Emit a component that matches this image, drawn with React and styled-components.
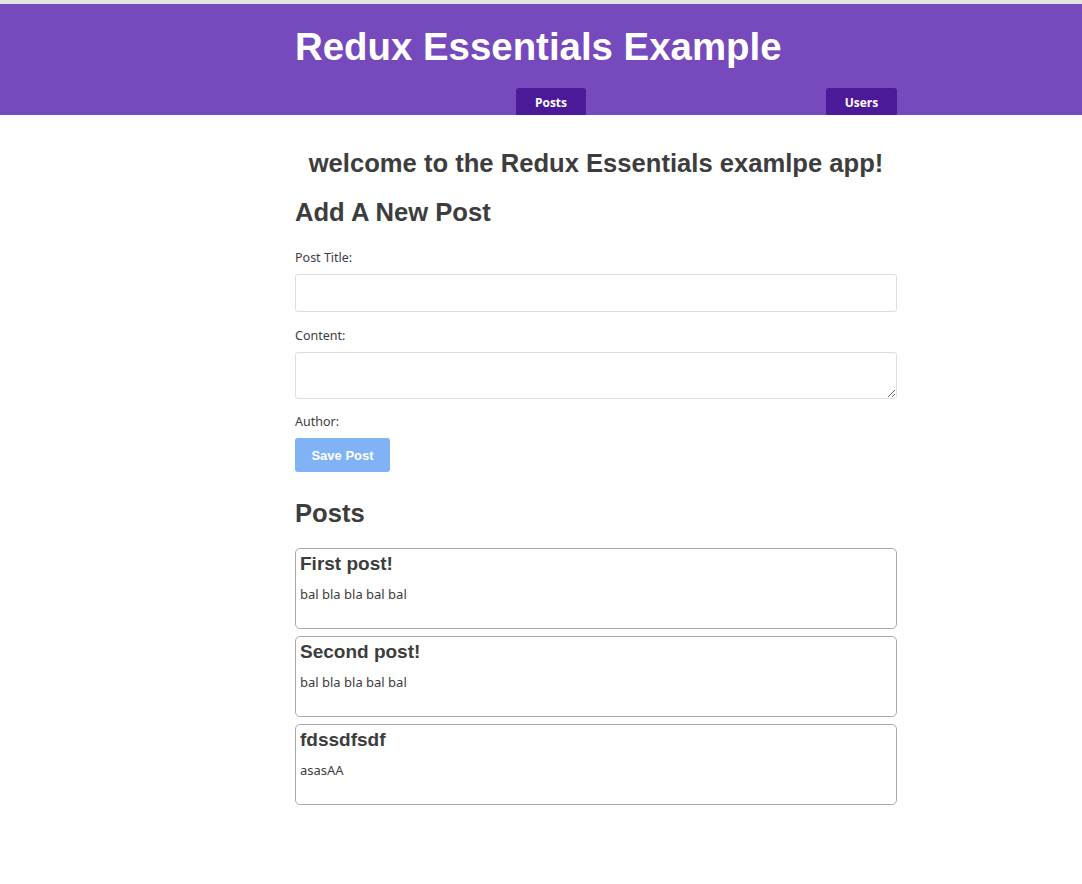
import React from 'react';
import styled, { createGlobalStyle } from 'styled-components';

const GlobalStyle = createGlobalStyle`
  body {
    margin: 0;
    font-family: "Noto Sans", "Open Sans", sans-serif;
    color: #3d3d3d;
    background: #fff;
  }
`;

const TopStrip = styled.div`
  height: 4px;
  background: #e4e4e4;
`;

const Nav = styled.nav`
  background: #764abc;
  height: 111px;
  overflow: hidden;
`;

const Inner = styled.div`
  width: 602px;
  margin-left: 295px;
`;

const NavTitle = styled.h1`
  margin: 0;
  padding-top: 21px;
  font-family: "Liberation Sans", Arial, sans-serif;
  font-size: 38.4px;
  font-weight: bold;
  color: #fff;
  line-height: 44px;
`;

const NavLinks = styled.div`
  display: flex;
  justify-content: flex-end;
  gap: 240px;
  margin-top: 19px;
`;

const NavButton = styled.a`
  display: inline-flex;
  align-items: center;
  justify-content: center;
  width: ${p => p.w}px;
  height: 28px;
  background: #4a1a98;
  border-radius: 3px;
  color: #fff;
  font-family: "Open Sans", sans-serif;
  font-weight: bold;
  font-size: 12px;
  text-decoration: none;
`;

const Main = styled.main`
  padding-top: 33px;
  padding-bottom: 60px;
`;

const Welcome = styled.h2`
  margin: 0;
  text-align: center;
  font-family: "Liberation Sans", Arial, sans-serif;
  font-size: 25.6px;
  font-weight: bold;
  line-height: 30px;
`;

const SectionTitle = styled.h2`
  margin: ${p => p.top}px 0 0;
  font-family: "Liberation Sans", Arial, sans-serif;
  font-size: 25.6px;
  font-weight: bold;
  line-height: 32px;
`;

const Form = styled.form`
  display: flex;
  flex-direction: column;
  margin-top: 22px;
`;

const Label = styled.label`
  font-size: 12.5px;
  line-height: 16px;
  margin-bottom: 8px;
`;

const TextInput = styled.input`
  box-sizing: border-box;
  height: 38px;
  border: 1px solid #dedede;
  border-radius: 3px;
  margin-bottom: 16px;
`;

const TextArea = styled.textarea`
  box-sizing: border-box;
  height: 47px;
  border: 1px solid #dedede;
  border-radius: 3px;
  margin: 0 0 15px;
`;

const SaveButton = styled.button`
  align-self: flex-start;
  width: 95px;
  height: 34px;
  border: none;
  border-radius: 3px;
  background: #80b2f6;
  color: #fff;
  font-family: "Liberation Sans", Arial, sans-serif;
  font-weight: bold;
  font-size: 13px;
`;

const PostList = styled.div`
  display: flex;
  flex-direction: column;
  gap: 7px;
  margin-top: 19px;
`;

const PostCard = styled.article`
  box-sizing: border-box;
  height: 81px;
  border: 1px solid #aaa;
  border-radius: 5px;
  padding: 3px 4px;
`;

const PostTitle = styled.h3`
  margin: 0;
  font-family: "Liberation Sans", Arial, sans-serif;
  font-size: 19px;
  font-weight: bold;
  line-height: 24px;
`;

const PostBody = styled.p`
  margin: 10px 0 0;
  font-size: 13px;
  line-height: 16px;
`;

const posts = [
  { id: 1, title: 'First post!', content: 'bal bla bla bal bal' },
  { id: 2, title: 'Second post!', content: 'bal bla bla bal bal' },
  { id: 3, title: 'fdssdfsdf', content: 'asasAA' },
];

function App() {
  return (
    <>
      <GlobalStyle />
      <TopStrip />
      <Nav>
        <Inner>
          <NavTitle>Redux Essentials Example</NavTitle>
          <NavLinks>
            <NavButton href="#" w={70}>Posts</NavButton>
            <NavButton href="#" w={71}>Users</NavButton>
          </NavLinks>
        </Inner>
      </Nav>
      <Main>
        <Inner>
          <Welcome>welcome to the Redux Essentials examlpe app!</Welcome>
          <SectionTitle top={18}>Add A New Post</SectionTitle>
          <Form onSubmit={e => e.preventDefault()}>
            <Label htmlFor="postTitle">Post Title:</Label>
            <TextInput id="postTitle" type="text" />
            <Label htmlFor="postContent">Content:</Label>
            <TextArea id="postContent" />
            <Label>Author:</Label>
            <SaveButton type="button">Save Post</SaveButton>
          </Form>
          <SectionTitle top={25}>Posts</SectionTitle>
          <PostList>
            {posts.map(post => (
              <PostCard key={post.id}>
                <PostTitle>{post.title}</PostTitle>
                <PostBody>{post.content}</PostBody>
              </PostCard>
            ))}
          </PostList>
        </Inner>
      </Main>
    </>
  );
}

export default App;
